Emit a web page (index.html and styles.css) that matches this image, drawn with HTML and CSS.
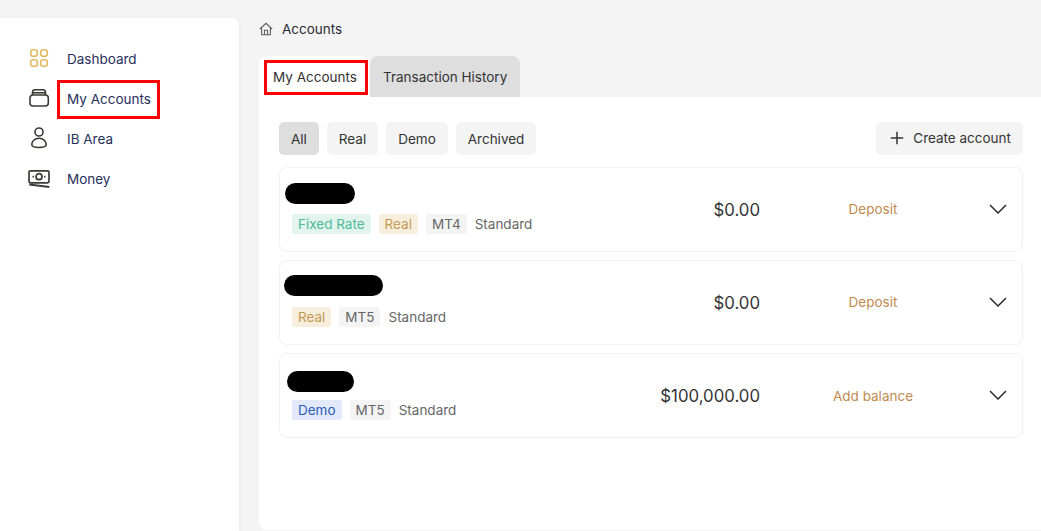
FILE: index.html
```html
<!DOCTYPE html>
<html lang="en">
<head>
    <meta charset="UTF-8">
    <meta name="viewport" content="width=device-width, initial-scale=1.0">
    <title>My Accounts</title>
    <link rel="stylesheet" href="styles.css">
</head>
<body>

<div class="layout">
    <aside class="sidebar">
        <a class="nav-item">
            <svg class="nav-icon" width="24" height="24" viewBox="0 0 24 24" fill="none" stroke="#e3b95f" stroke-width="1.6">
                <rect x="3.800" y="2.800" width="6.500" height="6.500" rx="2.200"/>
                <rect x="13.800" y="2.800" width="6.500" height="6.500" rx="2.200"/>
                <rect x="3.800" y="12.800" width="6.500" height="6.500" rx="2.200"/>
                <rect x="13.800" y="12.800" width="6.500" height="6.500" rx="2.200"/>
            </svg>
            <span>Dashboard</span>
        </a>
        <a class="nav-item nav-marked">
            <svg class="nav-icon" width="24" height="24" viewBox="0 0 24 24" fill="none" stroke="#3d3a36" stroke-width="1.6">
                <rect x="3" y="8" width="18.300" height="11" rx="3"/>
                <path d="M5.500 8V5.500c0-2 1-2.700 2.500-2.700h8c1.500 0 2.500.7 2.500 2.700V8"/>
                <path d="M6 5.800h12"/>
            </svg>
            <span>My Accounts</span>
        </a>
        <a class="nav-item">
            <svg class="nav-icon" width="24" height="24" viewBox="0 0 24 24" fill="none" stroke="#3d3a36" stroke-width="1.6">
                <circle cx="12" cy="5" r="4"/>
                <path d="M12 11.200c-4.500 0-7.200 3.300-7.200 6.300 0 1.900 2.800 3 7.200 3s7.200-1.100 7.200-3c0-3-2.700-6.300-7.200-6.300z"/>
            </svg>
            <span>IB Area</span>
        </a>
        <a class="nav-item">
            <svg class="nav-icon" width="24" height="24" viewBox="0 0 24 24" fill="none" stroke="#3d3a36" stroke-width="1.7">
                <rect x="2" y="3.800" width="20" height="12" rx="1.500"/>
                <circle cx="12" cy="9.700" r="3"/>
                <path d="M5.500 9.700h1.500M17 9.700h1.500"/>
                <path d="M2.300 17.500l20 2.500" stroke-width="1.800"/>
            </svg>
            <span>Money</span>
        </a>
    </aside>

    <main class="main">
        <div class="breadcrumb">
            <svg width="14" height="14" viewBox="0 0 16 16" fill="none" stroke="#5a5a5a" stroke-width="1.200">
                <path d="M1 8L8 1.500 15 8"/>
                <path d="M3 6.500V14.500h10V6.500"/>
                <path d="M6.200 14.500V9.500h3.600v5"/>
            </svg>
            <span>Accounts</span>
        </div>

        <div class="tabs">
            <div class="tab active">My Accounts <span class="mark-tab"></span></div>
            <div class="tab">Transaction History</div>
        </div>

        <section class="panel">
            <div class="toolbar">
                <div class="filters">
                    <button class="pill selected">All</button>
                    <button class="pill">Real</button>
                    <button class="pill">Demo</button>
                    <button class="pill">Archived</button>
                </div>
                <button class="pill create">
                    <svg width="16" height="16" viewBox="0 0 16 16" fill="none" stroke="#333" stroke-width="1.500">
                        <path d="M8 1.800v12.400M1.800 8h12.400"/>
                    </svg>
                    Create account
                </button>
            </div>

            <div class="account">
                <div class="info">
                    <div class="redact r1"></div>
                    <div class="tags">
                        <span class="tag green">Fixed Rate</span>
                        <span class="tag gold">Real</span>
                        <span class="tag grey">MT4</span>
                        <span class="plain">Standard</span>
                    </div>
                </div>
                <div class="amount">$0.00</div>
                <a class="action">Deposit</a>
                <svg class="chevron" width="18" height="10" viewBox="0 0 18 10" fill="none" stroke="#2b2b2b" stroke-width="1.500"><path d="M1 1l8 8 8-8"/></svg>
            </div>

            <div class="account">
                <div class="info">
                    <div class="redact r2"></div>
                    <div class="tags">
                        <span class="tag gold">Real</span>
                        <span class="tag grey">MT5</span>
                        <span class="plain">Standard</span>
                    </div>
                </div>
                <div class="amount">$0.00</div>
                <a class="action">Deposit</a>
                <svg class="chevron" width="18" height="10" viewBox="0 0 18 10" fill="none" stroke="#2b2b2b" stroke-width="1.500"><path d="M1 1l8 8 8-8"/></svg>
            </div>

            <div class="account">
                <div class="info">
                    <div class="redact r3"></div>
                    <div class="tags">
                        <span class="tag blue">Demo</span>
                        <span class="tag grey">MT5</span>
                        <span class="plain">Standard</span>
                    </div>
                </div>
                <div class="amount">$100,000.00</div>
                <a class="action add-balance">Add balance</a>
                <svg class="chevron" width="18" height="10" viewBox="0 0 18 10" fill="none" stroke="#2b2b2b" stroke-width="1.500"><path d="M1 1l8 8 8-8"/></svg>
            </div>
        </section>
    </main>
</div>

</body>
</html>
```

FILE: styles.css
```css
*, *::after { box-sizing: border-box; }
html, body { height: 100%; }
body { margin: 0; background-color: #f4f4f4; font-family: Inter, "Liberation Sans", sans-serif; font-size: 13.5px; color: #2f2b43; overflow: hidden; }
.layout { display: flex; height: 531px; }

.sidebar { width: 239px; margin-top: 18px; padding: 21px 0 0 27px; background-color: #fff; border-radius: 0 8px 0 0; box-shadow: 0 2px 8px rgba(0,0,0,0.05); flex-shrink: 0; }
.nav-item { display: flex; align-items: center; height: 40px; color: #27305a; }
.nav-icon { flex-shrink: 0; margin-right: 16px; }
.nav-marked { position: relative; }
.nav-marked::after { content: ""; position: absolute; left: 30px; top: 1px; width: 103px; height: 39px; border: 3px solid #f00; }

.main { flex: 1; padding: 0 0 1px 20px; display: flex; flex-direction: column; min-width: 0; }
.breadcrumb { display: flex; align-items: center; gap: 9px; height: 22px; margin-top: 18px; color: #2b2b33; }
.tabs { display: flex; gap: 1px; margin-top: 16px; height: 41px; }
.tab { position: relative; display: flex; align-items: center; padding: 0 13px; border-radius: 8px 8px 0 0; background-color: #dedede; color: #333; white-space: nowrap; }
.tab.active { background-color: #fff; width: 110px; padding-left: 14px; }
.mark-tab { position: absolute; left: 5px; top: 4px; width: 104px; height: 35px; border: 3px solid #f00; }

.panel { flex: 1; background-color: #fff; padding: 25px 18px 0 20px; border-radius: 0 0 0 8px; }
.toolbar { display: flex; justify-content: space-between; margin-bottom: 12px; }
.filters { display: flex; gap: 8px; }
.pill { height: 33px; padding: 0 12px; border: none; border-radius: 5px; background-color: #f4f4f4; color: #333; font-family: inherit; font-size: 13.5px; }
.pill.selected { background-color: #dedede; }
.create { display: flex; align-items: center; gap: 8px; padding: 0 12px 2px 13px; }

.account { display: grid; grid-template-columns: 1fr 150px 174px 47px; align-items: center; height: 85px; margin-bottom: 8px; padding: 0 15px 2px 0; border: 1px solid #f2f2f2; border-radius: 8px; }
.info { align-self: start; }
.redact { height: 21px; background-color: #000; border-radius: 11px; }
.r1 { width: 70px; margin: 15px 0 10px 5px; }
.r2 { width: 99px; margin: 14px 0 11px 4px; }
.r3 { width: 67px; margin: 17px 0 8px 7px; }
.tags { display: flex; align-items: center; gap: 8px; margin-left: 12px; }
.tag { height: 20px; line-height: 20px; padding: 0 6px; border-radius: 3px; color: #555; }
.green { background-color: #e3f4ee; color: #4dbb98; }
.gold { background-color: #f7eedd; color: #c49a54; }
.grey { background-color: #f4f4f4; color: #666; }
.blue { background-color: #e2e9fd; color: #2a5db0; }
.plain { color: #666; }
.amount { font-size: 16.8px; text-align: right; color: #333; margin: 2px 26px 0 0; }
.action { text-align: center; color: #c08a50; }
.add-balance { margin-top: 2px; }
.chevron { justify-self: end; }
```
